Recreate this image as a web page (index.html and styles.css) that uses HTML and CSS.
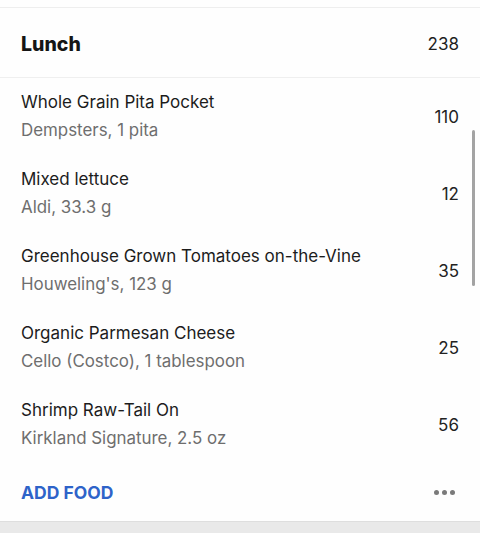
FILE: index.html
```html
<!DOCTYPE html>
<html>
<head>
<meta charset="utf-8">
<link rel="stylesheet" href="styles.css">
</head>
<body>
<div class="page">
  <div class="topgap"></div>
  <div class="card">
    <div class="header">
      <span class="meal">Lunch</span>
      <span class="total">238</span>
    </div>
    <div class="list">
      <div class="item">
        <div class="info"><div class="name">Whole Grain Pita Pocket</div><div class="sub">Dempsters, 1 pita</div></div>
        <div class="cal">110</div>
      </div>
      <div class="item">
        <div class="info"><div class="name">Mixed lettuce</div><div class="sub">Aldi, 33.3 g</div></div>
        <div class="cal">12</div>
      </div>
      <div class="item">
        <div class="info"><div class="name">Greenhouse Grown Tomatoes on-the-Vine</div><div class="sub">Houweling's, 123 g</div></div>
        <div class="cal">35</div>
      </div>
      <div class="item">
        <div class="info"><div class="name">Organic Parmesan Cheese</div><div class="sub">Cello (Costco), 1 tablespoon</div></div>
        <div class="cal">25</div>
      </div>
      <div class="item">
        <div class="info"><div class="name">Shrimp Raw-Tail On</div><div class="sub">Kirkland Signature, 2.5 oz</div></div>
        <div class="cal">56</div>
      </div>
    </div>
    <div class="footer">
      <span class="add">ADD FOOD</span>
      <span class="dots"><i></i><i></i><i></i></span>
    </div>
  </div>
  <div class="bottom"></div>
  <div class="scrollbar"></div>
</div>
</body>
</html>
```
FILE: styles.css
```css
* { box-sizing: border-box; margin: 0; padding: 0; }
html, body { width: 480px; height: 533px; overflow: hidden; background: #fefefe; }
body { font-family: Inter, "Noto Sans", sans-serif; color: #1c1c1c; }
.page { position: relative; width: 480px; height: 533px; display: flex; flex-direction: column; }
.topgap { height: 8px; border-bottom: 1px solid #eeeeee; background: #fefefe; }
.card { display: flex; flex-direction: column; }
.header { height: 70px; display: flex; align-items: center; justify-content: space-between; padding: 2px 21px 0 21px; border-bottom: 1px solid #efefef; }
.meal { font-size: 19.5px; font-weight: 800; color: #151515; }
.total { font-size: 17px; color: #1e1e1e; }
.item { height: 77px; display: flex; align-items: center; justify-content: space-between; padding: 0 21px 0 21px; }
.info { display: flex; flex-direction: column; gap: 6px; padding-bottom: 2px; }
.name { font-size: 17px; color: #1c1c1c; line-height: 22px; }
.sub { font-size: 16.9px; color: #6e6e6e; line-height: 22px; }
.cal { font-size: 17px; color: #222; }
.footer { height: 58px; display: flex; align-items: center; justify-content: space-between; padding: 0 25px 0 21px; }
.add { font-size: 17.5px; font-weight: 700; color: #2e63c9; }
.dots { display: flex; gap: 3px; }
.dots i { display: block; width: 5px; height: 5px; border-radius: 50%; background: #7a7a7a; }
.bottom { flex: 1; background: #e9e9e9; border-top: 1px solid #dedede; }
.scrollbar { position: absolute; left: 472px; top: 130px; width: 3px; height: 156px; border-radius: 2px; background: #a3a3a3; }
```
